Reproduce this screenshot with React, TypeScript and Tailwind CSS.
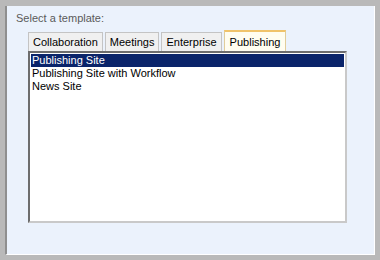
import React from 'react';

const tabs = ['Collaboration', 'Meetings', 'Enterprise', 'Publishing'];
const items = ['Publishing Site', 'Publishing Site with Workflow', 'News Site'];

const App = () => {
  return (
    <div className="w-[380px] h-[260px] bg-[#b9b9b9] pt-[6px] pl-[5px] pr-[5px] pb-[5px] font-['Liberation_Sans',Arial,sans-serif] text-[11px]">
      <div className="w-full h-full border-l-2 border-l-[#8f8f8f] border-r border-r-white border-b border-b-white bg-[#ebf2fc] pl-[9px] pt-[6px]">
        <div className="text-[#5a5a5a] leading-[13px]">Select a template:</div>
        <div className="ml-[12px] mt-[5px] flex items-end gap-[2px] h-[21px]">
          {tabs.map((t) =>
            t === 'Publishing' ? (
              <div
                key={t}
                className="h-[21px] px-[5px] pt-[3px] bg-[#fffdf0] border border-b-0 border-[#e1cd9a] border-t-2 border-t-[#f0c36a] text-black leading-[14px]"
              >
                {t}
              </div>
            ) : (
              <div
                key={t}
                className="h-[19px] px-[4px] pt-[2px] bg-[#f0f0f0] border border-b-0 border-[#c4c4c4] text-black leading-[14px]"
              >
                {t}
              </div>
            )
          )}
        </div>
        <div className="ml-[12px] w-[319px] h-[172px] border-t-2 border-l-2 border-t-[#6d6d6d] border-l-[#6d6d6d] border-r-2 border-b-2 border-r-[#c9c9c9] border-b-[#c9c9c9] bg-white p-px">
          <div className="w-full h-full">
            {items.map((it, i) => (
              <div
                key={it}
                className={
                  i === 0
                    ? 'h-[13px] leading-[13px] pl-[1px] bg-[#0a246a] text-white'
                    : 'h-[13px] leading-[13px] pl-[1px] text-black'
                }
              >
                {it}
              </div>
            ))}
          </div>
        </div>
      </div>
    </div>
  );
};

export default App;
